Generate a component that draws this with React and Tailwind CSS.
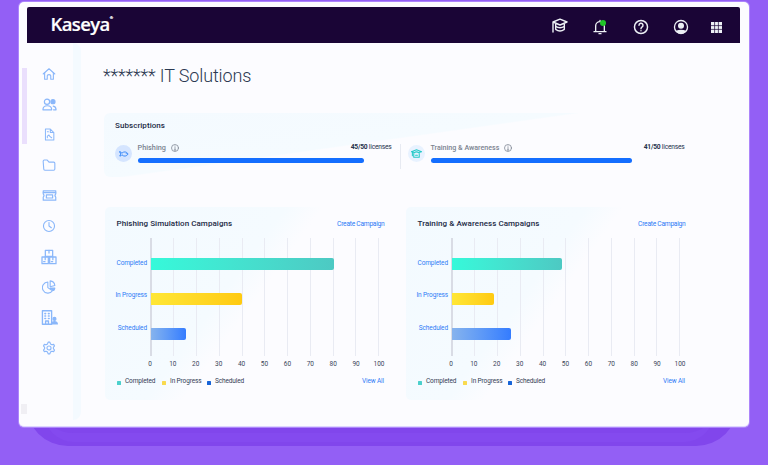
import React from "react";

const font = "font-['Roboto','Liberation_Sans',sans-serif]";

function Icon({ children, className = "", box = "0 0 24 24", width = 1.9 }) {
  return (
    <svg viewBox={box} className={`block shrink-0 ${className}`} fill="none" stroke="currentColor" strokeWidth={width} strokeLinecap="round" strokeLinejoin="round">
      {children}
    </svg>
  );
}

const navIcons = [
  { name: "Home", size: "size-[14px]", art: <><path d="M2 12 12 3l10 9" /><path d="M4.500 10v11H9v-6q0-2 3-2t3 2v6h4.500V10" /></> },
  { name: "Users", size: "size-[15px]", art: <><circle cx="8" cy="7.500" r="4.200" /><path d="M1.500 20.500c0-5 3-6.500 7-6.500s7 1.500 7 6.500zM18 14.500c3 .5 4.500 2.500 4.500 6h-4" /><circle cx="17.500" cy="7.500" r="3.300" fill="currentColor" /></> },
  { name: "Reports", size: "size-[13px]", art: <><path d="M4.500 2h9l6.500 6.500V22h-15.500zM13.500 2v6.500H20" /><path d="M8 7h2M8 18v-3l3-2 2 3 3 2" /></> },
  { name: "Folders", size: "size-[14px]", art: <path d="M2 5.500q0-2 2-2h5l3 3.500h8q2 0 2 2V19q0 2-2 2H5q-2 0-2-2z" /> },
  { name: "Tickets", size: "size-[15px]", art: <><path d="M2 4.500h20v5q-2.500 2.500 0 5v5H2v-5q2.500-2.500 0-5z" /><path d="M2 7.500h20M7 11h10v5H7z" /></> },
  { name: "History", size: "size-[14px]", art: <><circle cx="12" cy="12" r="9.500" /><path d="M12 6v6l4 3" /></> },
  { name: "Packages", size: "size-[16px]", art: <><path d="M6.500 2h11v9h-11zM1.500 12H11v10H1.500zM13 12h9.500v10H13z" /><path d="M12 2v4M6.300 12v4M17.800 12v4M4 19h2M15.500 19h2" /></> },
  { name: "Analytics", size: "size-[14px]", art: <><path d="M10 3.500a9.500 9.500 0 1 0 8 15L10 13z" /><path d="M14 1.500a9 9 0 0 1 8 8l-8 2z" /><path d="M14 14h8a8 8 0 0 1-2 4z" fill="currentColor" /></> },
  { name: "Organization", size: "size-[17px]", art: <><path d="M2 2.500h13v19H2zM6.500 21.500V17h4v4.500" /><path d="M5.500 6.500h1M10.500 6.500h1M5.500 10h1M10.500 10h1M5.500 13.500h1M10.500 13.500h1" strokeWidth="2.200" /><circle cx="19" cy="14" r="2" fill="currentColor" /><path d="M15.500 21q0-3 3.500-3t4 3z" fill="currentColor" /></> },
  { name: "Settings", size: "size-[14px]", art: <><path d="m9.500 5 1-3h3l1 3 2.500 1.500 3-.7 1.500 2.700-2 2.300v2.400l2 2.300-1.500 2.700-3-.7-2.500 1.500-1 3h-3l-1-3L7 17.500l-3 .7-1.500-2.700 2-2.300v-2.400l-2-2.300L4 5.800l3 .7z" /><circle cx="12" cy="12" r="3.500" /></> },
];

function Info() {
  return (
    <Icon className="size-[8px]" box="0 0 16 16" width={1.5}>
      <circle cx="8" cy="8" r="7" />
      <path d="M8 7v5M6.500 12h3M8 4v.5" />
    </Icon>
  );
}

function License({ label, used, icon, badge, bar, labelSize }) {
  return (
    <div className="flex h-[27px]">
      <div className={`mt-[2px] flex size-[17px] shrink-0 items-center justify-center rounded-full ${badge}`}>{icon}</div>
      <div className="ml-[5.500px] w-[254px]">
        <div className="flex h-[15px] items-start justify-between">
          <div className={`flex items-center gap-[5px] leading-[10px] font-medium text-[#7b8390] ${labelSize}`}>
            <span>{label}</span>
            <Info />
          </div>
          <div className="text-[6.7px] leading-[9px] tracking-[-0.22px] whitespace-nowrap text-[#26334d]"><b className="font-bold">{used}/50</b> licenses</div>
        </div>
        <div className={`h-[5px] rounded-full bg-[#146eff] ${bar}`} />
      </div>
    </div>
  );
}

const ticks = [0, 10, 20, 30, 40, 50, 60, 70, 80, 90, 100];
const legend = [
  ["Completed", "bg-[#4bd0cc]", "w-[45px]"],
  ["In Progress", "bg-[#f9da4f]", "w-[45px]"],
  ["Scheduled", "bg-[#1764d8]", "w-[45px]"],
];

function Campaigns({ title, bars }) {
  const rows = [
    ["Completed", "from-[#35f9da] to-[#4dc9c3]"],
    ["In Progress", "from-[#ffe735] to-[#ffca10]"],
    ["Scheduled", "from-[#86b3ed] to-[#347cff]"],
  ];
  return (
    <section className="h-[193px] w-[280px] rounded-[5px] bg-[linear-gradient(126deg,#f3faff_0%,#f5fbff_43%,#fcfcff_52%)] pl-[11.500px]">
      <div className="flex h-[31px] w-[268px] items-center justify-between pt-[3px]">
        <h2 className="text-[8px] leading-[10px] font-medium tracking-[0.06px] whitespace-nowrap text-[#1c2a45]">{title}</h2>
        <a className="text-[6.7px] leading-[9px] tracking-[-0.27px] whitespace-nowrap text-[#2d7bf6]">Create Campaign</a>
      </div>
      <div className="flex h-[118px]">
        <div className="flex w-[30.500px] shrink-0 flex-col items-end pt-[21px] text-[6.5px] leading-[9px] tracking-[-0.12px] whitespace-nowrap text-[#2d7bf6]">
          {rows.map(([name]) => <span key={name} className="h-[33px]">{name}</span>)}
        </div>
        <div className="ml-[3px] grid h-[118px] w-[229px]">
          <div className="col-start-1 row-start-1 flex justify-between">
            {ticks.map((t) => <i key={t} className={t === 0 ? "w-[1.500px] bg-[#d9dce5]" : "w-px bg-[#e9ebf3]"} />)}
          </div>
          <div className="col-start-1 row-start-1 flex flex-col gap-[22.500px] pt-[19.500px] pl-[1px]">
            {rows.map(([name, gradient], i) => (
              <div key={name} className={`h-[12.500px] rounded-r-[2px] bg-linear-to-r ${gradient}`} style={{ width: bars[i] }} />
            ))}
          </div>
        </div>
      </div>
      <div className="ml-[22px] flex h-[21px] w-[252px] justify-between pt-[4px] text-[6.5px] leading-[9px] text-[#3a4659]">
        {ticks.map((t) => <span key={t} className="flex w-[23px] justify-center">{t}</span>)}
      </div>
      <div className="flex h-[9px] w-[267.500px] items-center text-[6.5px] leading-[9px] tracking-[-0.13px] whitespace-nowrap text-[#344055]">
        {legend.map(([name, color, width]) => (
          <div key={name} className={`flex items-center gap-[4.500px] ${width}`}>
            <i className={`mt-[2px] size-[4px] shrink-0 rounded-[0.5px] ${color}`} />
            <span>{name}</span>
          </div>
        ))}
        <a className="ml-auto text-[#2d7bf6]">View All</a>
      </div>
    </section>
  );
}

export default function App() {
  return (
    <div className={`relative h-[465px] w-[768px] overflow-hidden bg-[#935ff5] pt-[2px] pl-[19px] ${font}`}>
      <div className="absolute top-[370px] left-[26px] h-[76px] w-[712px] rounded-b-[42px] bg-[#8146ec]" />
      <div className="absolute top-[370px] left-[44px] h-[72px] w-[670px] rounded-b-[30px] border-b-[9px] border-[#844aef]" />
      <div className="relative h-[425px] w-[730px] rounded-[5px] border-b border-[#ddd5ff] bg-[#fcfcff] pt-[5px] pl-[8px] shadow-[0_0_0_1px_#ad85fb]">
        <i className="absolute top-[66px] left-[3px] h-[76px] w-[5px] bg-[#eadffd]" />
        <i className="absolute top-[402px] left-[2px] h-[10px] w-[6px] bg-[#f0eff4]" />
        <header className="flex h-[36px] w-[713px] items-center rounded-t-[2px] bg-[#1a0536] pl-[23.500px] text-white">
          <div className="flex w-[501px] items-start pb-[2px] font-['Open_Sans','Noto_Sans',sans-serif] text-[18.500px] leading-[28px] font-semibold tracking-[-0.6px] [-webkit-text-stroke:0.2px_white]">
            <span>Kaseya</span><span className="mt-[5px] text-[4px] leading-[6px]">®</span>
          </div>
          <div className="flex items-center pt-[4px] text-[#edf1f5]">
            <Icon className="mb-[2px] h-[16px] w-[16px]" width={2.1}>
              <path d="M1.500 21V6L12 1.800 22.500 6 12 10.500 1.500 6M5.500 8v9Q12 22 18.500 17V8M5.500 12.500q6.500 4 13 0" />
            </Icon>
            <div className="relative ml-[24.500px]">
              <Icon className="size-[16px]" width={2}>
                <path d="M3 19h18M5.500 19V10.500a6.500 6.500 0 0 1 13 0V19M12 2v2M10.500 22h3" />
              </Icon>
              <i className="absolute top-[0.500px] right-[2.500px] size-[6px] rounded-full bg-[#20c528]" />
            </div>
            <Icon className="ml-[24.500px] size-[16px]" width={2.2}>
              <circle cx="12" cy="12" r="9.800" />
              <path d="M9 9.500a3 3 0 1 1 4.500 2.500Q12 13 12 14.500M12 17.500v.2" />
            </Icon>
            <Icon className="ml-[24px] size-[16px]" width={2}>
              <circle cx="12" cy="12" r="9.800" />
              <circle cx="12" cy="10" r="3.500" fill="currentColor" />
              <path d="M5 18.500q7-3 14 0-7 6-14 0z" fill="currentColor" />
            </Icon>
            <Icon className="ml-[22.500px] size-[11px]" box="0 0 11 11" width={0}>
              <path d="M0 0h11v11H0z" fill="currentColor" />
              <path d="M3.600 0v11M7.400 0v11M0 3.600h11M0 7.400h11" stroke="#1a0536" strokeWidth="0.7" />
            </Icon>
          </div>
        </header>
        <div className="flex h-[377px]">
          <nav className="flex w-[54px] shrink-0 flex-col rounded-r-[8px] border-r-[8px] border-[#f4faff] pt-[15.500px] pr-[2px] text-[#8ab7fa]">
            {navIcons.map((item) => (
              <div key={item.name} className="flex h-[30.500px] items-center justify-center" aria-label={item.name}>
                <Icon className={item.size}>{item.art}</Icon>
              </div>
            ))}
          </nav>
          <main className="ml-[22px] w-[600px]">
            <h1 className="mt-[21px] h-[49px] text-[18px] leading-[24px] font-light tracking-[-0.13px] whitespace-nowrap text-[#2b3951]">******* IT Solutions</h1>
            <section className="ml-[1px] h-[64px] w-[586px] rounded-[6px] bg-[linear-gradient(172deg,#f4faff_0%,#f5fbff_45%,#fcfcff_46%)] pt-[7px] pl-[11px]">
              <h2 className="h-[23px] text-[8px] leading-[12px] font-medium tracking-[0.06px] text-[#1c2a45]">Subscriptions</h2>
              <div className="flex items-center">
                <License
                  label="Phishing"
                  used={45}
                  labelSize="text-[7.3px]"
                  badge="bg-[#d5e5ff]"
                  bar="w-[226px]"
                  icon={<Icon className="size-[10px] text-[#2e82f7]" width={2.2}><path d="M2 7q0 3 3 5-3 2-3 5 3 0 5-3 8 7 15-2-7-9-15-2-2-3-5-3zM17.500 11v.3" /></Icon>}
                />
                <div className="ml-[8px] h-[25px] w-px bg-[#e7eaf2]" />
                <div className="ml-[7.500px]">
                  <License
                    label="Training & Awareness"
                    used={41}
                    labelSize="text-[7.1px]"
                    badge="bg-[#e8f2ff]"
                    bar="w-[201px]"
                    icon={<Icon className="size-[11px] text-[#25c9c8]" width={2.3}><path d="M1 8 12 4l11 4-6 2M7 10 1 8M3 9v8M6 12v8h12v-8M10 16h4" /><path d="M7 10q5-3 10 0" /></Icon>}
                  />
                </div>
              </div>
            </section>
            <div className="mt-[30px] ml-[2px] flex gap-[21px]">
              <Campaigns title="Phishing Simulation Campaigns" bars={[183, 91, 34.500]} />
              <Campaigns title="Training & Awareness Campaigns" bars={[110, 41.500, 59]} />
            </div>
          </main>
        </div>
      </div>
    </div>
  );
}
